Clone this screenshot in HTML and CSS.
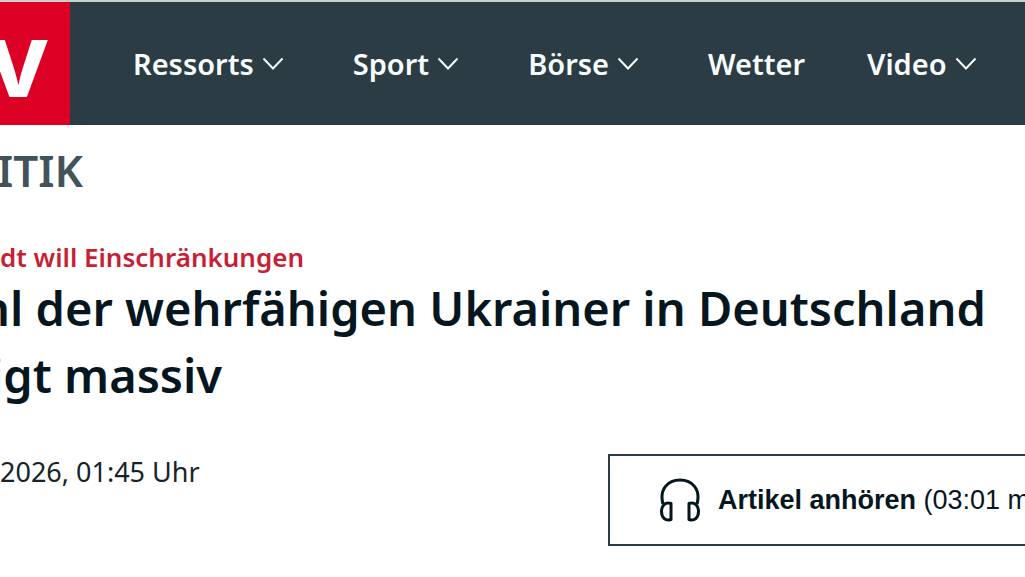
FILE: index.html
```html
<!DOCTYPE html>
<html lang="de">
<head>
<meta charset="utf-8">
<meta name="viewport" content="width=device-width, initial-scale=1">
<title>Politik</title>
<link rel="stylesheet" href="styles.css">
</head>
<body>
<header class="site-header">
  <a class="logo" href="#">v</a>
  <nav class="nav">
    <button class="nav-item" type="button">Ressorts<svg class="chevron" viewBox="0 0 22 14" aria-hidden="true"><path d="M1.500 1.500 11 11.500 20.500 1.500"/></svg></button>
    <button class="nav-item" type="button">Sport<svg class="chevron" viewBox="0 0 22 14" aria-hidden="true"><path d="M1.500 1.500 11 11.500 20.500 1.500"/></svg></button>
    <button class="nav-item" type="button">Börse<svg class="chevron" viewBox="0 0 22 14" aria-hidden="true"><path d="M1.500 1.500 11 11.500 20.500 1.500"/></svg></button>
    <a class="nav-item" href="#">Wetter</a>
    <button class="nav-item" type="button">Video<svg class="chevron" viewBox="0 0 22 14" aria-hidden="true"><path d="M1.500 1.500 11 11.500 20.500 1.500"/></svg></button>
  </nav>
</header>
<main class="article">
  <p class="section">ITIK</p>
  <p class="kicker">dt will Einschränkungen</p>
  <h1 class="headline"><span class="line line-first">hl der wehrfähigen Ukrainer in Deutschland</span> <span class="line line-second">igt massiv</span></h1>
  <div class="meta">
    <time class="date">2026, 01:45 Uhr</time>
    <button class="listen" type="button">
      <svg class="headphones" viewBox="0 0 40 44" aria-hidden="true"><path d="M3 26C-1 11 8 2 20 2s21 9 17 24"/><path d="M11 25.500v16C5 43.500 1.500 39 1.500 33.500S5 23.500 11 25.500z"/><path d="M29 25.500v16c6 2 9.500-2.500 9.500-8S35 23.500 29 25.500z"/></svg>
      <span><strong>Artikel anhören</strong> (03:01 m</span>
    </button>
  </div>
</main>
</body>
</html>
```
FILE: styles.css
```css
* { box-sizing: border-box; }
body {
  margin: 0;
  overflow-x: hidden;
  background: #fff;
  color: #06161f;
  font-family: "Noto Sans", sans-serif;
}
p, h1 { margin: 0; }
button { border: 0; background: none; cursor: pointer; }
.site-header {
  display: flex;
  height: 125px;
  border-top: 2px solid #c9d1cf;
  background: #2c3c44;
}
.logo {
  display: flex;
  flex: none;
  align-items: center;
  width: 70px;
  padding-bottom: 10px;
  overflow: hidden;
  background: #db0024;
  color: #fff;
  font: 700 104px/1 Inter, sans-serif;
  text-decoration: none;
  text-indent: -13px;
}
.nav {
  display: flex;
  flex: none;
  align-items: center;
  gap: 62px;
  padding-left: 63px;
}
.nav-item {
  display: flex;
  align-items: center;
  gap: 8px;
  padding: 0;
  color: #f8fcfd;
  font: 600 29px/40px "Noto Sans", sans-serif;
  text-decoration: none;
  white-space: nowrap;
}
.chevron {
  width: 22px;
  height: 14px;
  margin-right: 7px;
  fill: none;
  stroke: currentColor;
  stroke-width: 2;
}
.section {
  margin-top: 15px;
  margin-left: -3px;
  color: #43535c;
  font-size: 44px;
  font-weight: 600;
  line-height: 60px;
}
.kicker {
  margin-top: 39px;
  color: #c71f35;
  font-size: 26px;
  font-weight: 600;
  line-height: 36px;
}
.headline { font-size: 47px; font-weight: 600; line-height: 67px; }
.line { display: block; white-space: nowrap; }
.line-first { margin-left: -20px; }
.line-second { margin-left: -10px; }
.meta { display: flex; justify-content: space-between; padding-top: 45px; }
.date { color: #17232a; font-size: 27px; line-height: 36px; }
.listen {
  display: flex;
  align-items: center;
  gap: 18px;
  height: 92px;
  margin-right: -7px;
  padding: 0 0 0 50px;
  border: 2px solid #2d3c45;
  color: #06161f;
  font: 27px/36px "Liberation Sans", sans-serif;
  white-space: nowrap;
}
.headphones { width: 40px; height: 44px; fill: none; stroke: currentColor; stroke-width: 3; stroke-linejoin: round; }
```
